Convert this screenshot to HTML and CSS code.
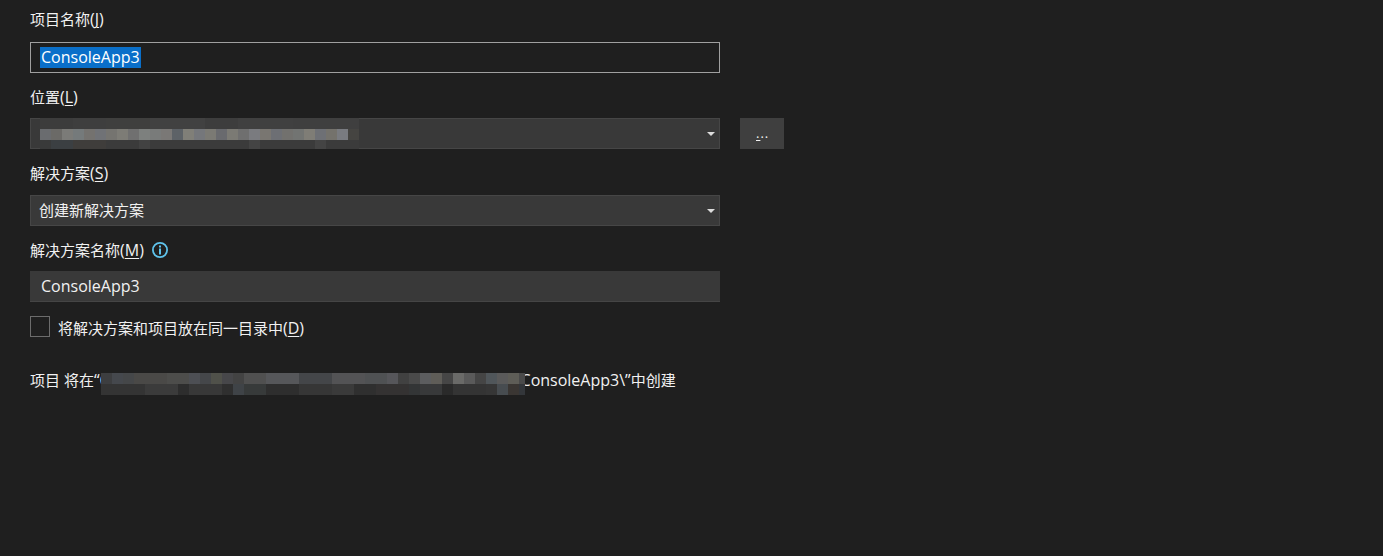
FILE: index.html
```html
<!DOCTYPE html>
<html lang="zh-CN">
<head>
<meta charset="utf-8">
<title>配置新项目</title>
<link rel="stylesheet" href="styles.css">
</head>
<body>
<main class="form">
  <div class="label label-first">项目名称<span class="en">(<u>J</u>)</span></div>
  <div class="row">
    <div class="control control-focus"><span class="selected en">ConsoleApp3</span></div>
  </div>

  <div class="label label-second">位置<span class="en">(<u>L</u>)</span></div>
  <div class="row">
    <div class="control control-select">
      <div class="mosaic-location"></div>
      <span class="caret"></span>
    </div>
    <div class="browse"><span class="browse-text"><u>.</u>..</span></div>
  </div>

  <div class="label label-third">解决方案<span class="en">(<u>S</u>)</span></div>
  <div class="row">
    <div class="control control-select control-tight">创建新解决方案<span class="caret"></span></div>
  </div>

  <div class="label label-fourth">
    <span>解决方案名称<span class="en">(<u>M</u>)</span></span>
    <svg class="info" width="18" height="18" viewBox="0 0 18 18" aria-hidden="true">
      <circle cx="9" cy="9" r="7.1" fill="none" stroke="#5fc3ec" stroke-width="1.8"/>
      <rect x="8" y="7.5" width="2" height="6" fill="#5fc3ec"/>
      <rect x="8" y="4.5" width="2" height="2" fill="#5fc3ec"/>
    </svg>
  </div>
  <div class="row">
    <div class="control en">ConsoleApp3</div>
  </div>

  <label class="check">
    <span class="box"></span>
    <span class="check-text">将解决方案和项目放在同一目录中<span class="en">(<u>D</u>)</span></span>
  </label>

  <p class="summary">项目 将在<span class="en">“C</span><span class="mosaic-path"></span><span class="en">ConsoleApp3\”</span>中创建</p>
</main>
</body>
</html>
```

FILE: styles.css
```css
* { box-sizing: border-box; }
html, body { margin: 0; height: 100%; }
body {
  background: #1f1f1f;
  color: #f1f1f1;
  font-family: "Open Sans", "Noto Sans CJK SC", sans-serif;
  font-size: 15px;
  line-height: 22px;
  overflow: hidden;
}
.form { padding: 8px 0 0 30px; }
.en { font-size: 16px; }
u { text-underline-offset: 2px; text-decoration-thickness: 1px; }

.label { height: 22px; }
.label-first { margin-bottom: 12px; }
.label-second { margin-top: 13px; margin-bottom: 10px; }
.label-third { margin-top: 13px; margin-bottom: 11px; }
.label-fourth { margin-top: 13px; margin-bottom: 10px; display: flex; align-items: center; }
.info { margin-left: 7px; }

.row { display: flex; gap: 20px; }
.control {
  position: relative;
  display: flex;
  align-items: center;
  width: 690px;
  height: 31px;
  padding-left: 11px;
  background: #393939;
  border-bottom: 1px solid #454545;
}
.control-focus {
  background: #1f1f1f;
  border: 1px solid #a0a0a0;
  padding-left: 9px;
}
.control-select {
  border: 1px solid #464646;
  padding-left: 9px;
}
.control-tight { padding-left: 8px; padding-bottom: 1px; }
.selected {
  background: #0a6fc9;
  color: #fff;
  height: 21px;
  line-height: 21px;
  padding: 0 1px;
}
.caret {
  position: absolute;
  right: 4px;
  top: 13px;
  width: 0;
  height: 0;
  border-left: 4px solid transparent;
  border-right: 4px solid transparent;
  border-top: 4px solid #dcdcdc;
}
.browse {
  width: 44px;
  height: 31px;
  padding: 6px 0 0 16px;
  background: #3f3f3f;
}
.browse-text { display: block; font-size: 13px; line-height: 18px; height: 18px; letter-spacing: 1px; }

.check {
  display: flex;
  align-items: center;
  gap: 8px;
  margin-top: 14px;
  height: 21px;
}
.check-text { margin-top: 2px; }
.box {
  width: 20px;
  height: 21px;
  border: 1px solid #6c6c6c;
}
.summary {
  margin: 32px 0 0;
  white-space: nowrap;
  height: 22px;
}

.mosaic-location {
  width: 319px;
  height: 31px;
  margin-top: -1px;
  margin-bottom: -1px;
  background-repeat: no-repeat;
  background-size: 319px 11px, 319px 11px, 319px 9px;
  background-position: 0 0, 0 11px, 0 22px;
  background-image:
    linear-gradient(90deg, #3c3c3c 0 33px, #3e3e3e 33px 66px, #3f3f3e 66px 110px, #414141 110px 165px, #3d3d3d 165px 198px, #404040 198px 253px, #3f3f3f 253px 319px),
    linear-gradient(90deg, #6a6c6f 0 11px, #6b6a67 11px 22px, #7b7b78 22px 33px, #757a7b 33px 44px, #74726f 44px 55px, #707276 55px 66px, #757470 66px 77px, #7d7c76 77px 88px, #707070 88px 99px, #7d807e 99px 110px, #797b7a 110px 121px, #7a7876 121px 132px, #5d6267 132px 143px, #807f78 143px 154px, #75777b 154px 165px, #7b7a74 165px 176px, #696a6e 176px 187px, #7b7a74 187px 198px, #6f6f6f 198px 209px, #7a7b7f 209px 220px, #797671 220px 231px, #6d6f74 231px 242px, #72716e 242px 253px, #727472 253px 264px, #7f7d76 264px 275px, #6e7075 275px 286px, #74726c 286px 297px, #797b80 297px 308px, #454441 308px 319px),
    linear-gradient(90deg, #393a3a 0 11px, #3b3f42 11px 33px, #3f3d3b 33px 66px, #3b3b3b 66px 99px, #424242 99px 110px, #3b3b3b 110px 209px, #444444 209px 220px, #3b3b3b 220px 275px, #444444 275px 286px, #3b3b3b 286px 319px);
}
.mosaic-path {
  display: inline-block;
  position: relative;
  z-index: 1;
  vertical-align: top;
  width: 424px;
  height: 22px;
  margin: 4px -4px -4px -9px;
  background-repeat: no-repeat;
  background-size: 424px 11px, 424px 11px;
  background-position: 0 0, 0 11px;
  background-image:
    linear-gradient(90deg, #3d3e40 0 11px, #45484d 11px 22px, #454749 22px 33px, #4a4947 33px 66px, #4d4d4b 66px 88px, #4d4f54 88px 99px, #45474a 99px 110px, #50514a 110px 121px, #47474a 121px 132px, #434343 132px 143px, #505050 143px 165px, #56575a 165px 198px, #444649 198px 231px, #535355 231px 264px, #4f5153 264px 286px, #56565a 286px 297px, #414141 297px 308px, #4a4a4a 308px 319px, #5c5d5f 319px 330px, #5f5d58 330px 341px, #464646 341px 352px, #6a6a68 352px 363px, #5a5a5a 363px 374px, #454545 374px 385px, #50565a 385px 396px, #5a5a5a 396px 407px, #5e5d57 407px 418px, #4a4a4a 418px 424px),
    linear-gradient(90deg, #343434 0 44px, #3b3b3b 44px 77px, #2d2d2d 77px 88px, #383838 88px 121px, #2f2f2f 121px 132px, #3f4347 132px 143px, #373a3a 143px 165px, #2e2e2e 165px 198px, #363636 198px 231px, #3a3a3a 231px 253px, #2f2f2f 253px 275px, #343232 275px 308px, #333536 308px 319px, #38393a 319px 341px, #2a2a2a 341px 352px, #343434 352px 385px, #363636 385px 396px, #474c50 396px 407px, #3a3633 407px 418px, #33363a 418px 424px);
}
```
